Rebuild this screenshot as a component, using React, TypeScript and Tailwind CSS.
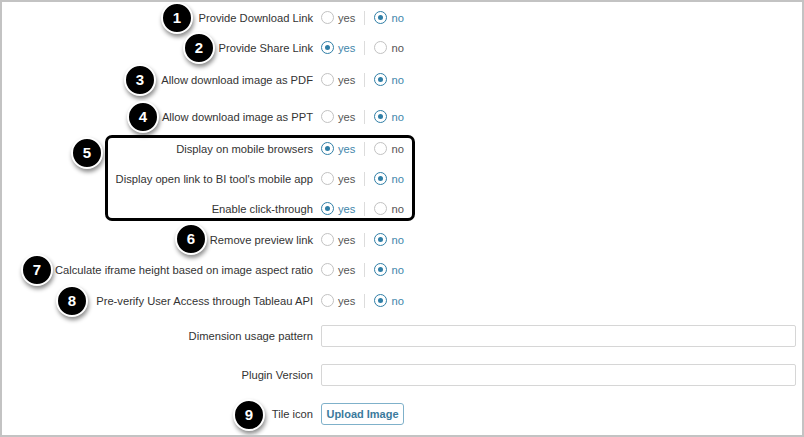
import React from 'react';

type Choice = 'yes' | 'no';

const Radio: React.FC<{ checked: boolean; label: string }> = ({ checked, label }) => (
  <span className="flex items-center gap-[4px]">
    <span
      className={
        checked
          ? 'flex h-[13px] w-[13px] items-center justify-center rounded-full border-[1.5px] border-[#2f7ea6] bg-white'
          : 'h-[13px] w-[13px] rounded-full border border-[#c2c2c2] bg-white'
      }
    >
      {checked && <span className="h-[5px] w-[5px] rounded-full bg-[#2f7ea6]" />}
    </span>
    <span className={checked ? 'text-[#3f86ab]' : 'text-[#555]'}>{label}</span>
  </span>
);

const YesNo: React.FC<{ value: Choice }> = ({ value }) => (
  <div className="flex items-center">
    <Radio checked={value === 'yes'} label="yes" />
    <span className="mx-[9px] h-[14px] w-px bg-[#dcdcdc]" />
    <Radio checked={value === 'no'} label="no" />
  </div>
);

const ToggleRow: React.FC<{ label: string; value: Choice; labelWidth: string; className?: string }> = ({
  label,
  value,
  labelWidth,
  className = 'h-[30px]',
}) => (
  <div className={`flex items-center ${className}`}>
    <div className={`${labelWidth} pr-[8px] text-right text-[#333]`}>{label}</div>
    <YesNo value={value} />
  </div>
);

const Badge: React.FC<{ n: number; x: number; y: number }> = ({ n, x, y }) => (
  <div
    className="absolute flex h-[32px] w-[32px] items-center justify-center rounded-full border-2 border-white bg-black text-[15px] font-bold text-white shadow-[1px_3px_4px_rgba(0,0,0,0.45)]"
    style={{ left: x - 18, top: y - 18 }}
  >
    {n}
  </div>
);

const badges = [
  { n: 1, x: 177, y: 18 },
  { n: 2, x: 199, y: 48 },
  { n: 3, x: 140, y: 80 },
  { n: 4, x: 143, y: 117 },
  { n: 5, x: 87, y: 153 },
  { n: 6, x: 191, y: 239 },
  { n: 7, x: 37, y: 270 },
  { n: 8, x: 72, y: 301 },
  { n: 9, x: 249, y: 415 },
];

export default function App() {
  return (
    <div className="h-[437px] w-[804px] overflow-hidden border-2 border-[#c3c3c3] bg-white font-['Liberation_Sans',Arial,sans-serif] text-[11.2px]">
      <div className="relative flex flex-col pt-[1px]">
        <ToggleRow label="Provide Download Link" value="no" labelWidth="w-[319px]" />
        <ToggleRow label="Provide Share Link" value="yes" labelWidth="w-[319px]" />
        <ToggleRow label="Allow download image as PDF" value="no" labelWidth="w-[319px]" className="mt-[2px] h-[30px]" />
        <ToggleRow label="Allow download image as PPT" value="no" labelWidth="w-[319px]" className="mt-[7px] h-[30px]" />

        <div className="ml-[103px] mt-[3px] flex w-[310px] flex-col gap-[12px] rounded-[7px] border-[3px] border-black pt-[2px]">
          <ToggleRow label="Display on mobile browsers" value="yes" labelWidth="w-[213px]" className="h-[18px]" />
          <ToggleRow label="Display open link to BI tool's mobile app" value="no" labelWidth="w-[213px]" className="h-[18px]" />
          <ToggleRow label="Enable click-through" value="yes" labelWidth="w-[213px]" className="h-[18px]" />
        </div>

        <ToggleRow label="Remove preview link" value="no" labelWidth="w-[319px]" className="mt-[4px] h-[30px]" />
        <ToggleRow label="Calculate iframe height based on image aspect ratio" value="no" labelWidth="w-[319px]" />
        <ToggleRow label="Pre-verify User Access through Tableau API" value="no" labelWidth="w-[319px]" className="mt-[1px] h-[30px]" />

        <div className="mt-[9px] flex h-[22px] items-center">
          <div className="w-[319px] pr-[8px] text-right text-[#333]">Dimension usage pattern</div>
          <input className="h-[22px] w-[475px] rounded-[2px] border border-[#d6d6d6] bg-white px-2 outline-none" />
        </div>
        <div className="mt-[17px] flex h-[22px] items-center">
          <div className="w-[319px] pr-[8px] text-right text-[#333]">Plugin Version</div>
          <input className="h-[22px] w-[475px] rounded-[2px] border border-[#d6d6d6] bg-white px-2 outline-none" />
        </div>
        <div className="mt-[17px] flex h-[22px] items-center">
          <div className="w-[319px] pr-[8px] text-right text-[#333]">Tile icon</div>
          <button className="h-[22px] w-[83px] rounded-[3px] border border-[#7fb1ca] bg-white text-[11px] font-bold text-[#3b7a9c]">
            Upload Image
          </button>
        </div>

        {badges.map((b) => (
          <Badge key={b.n} n={b.n} x={b.x} y={b.y} />
        ))}
      </div>
    </div>
  );
}
